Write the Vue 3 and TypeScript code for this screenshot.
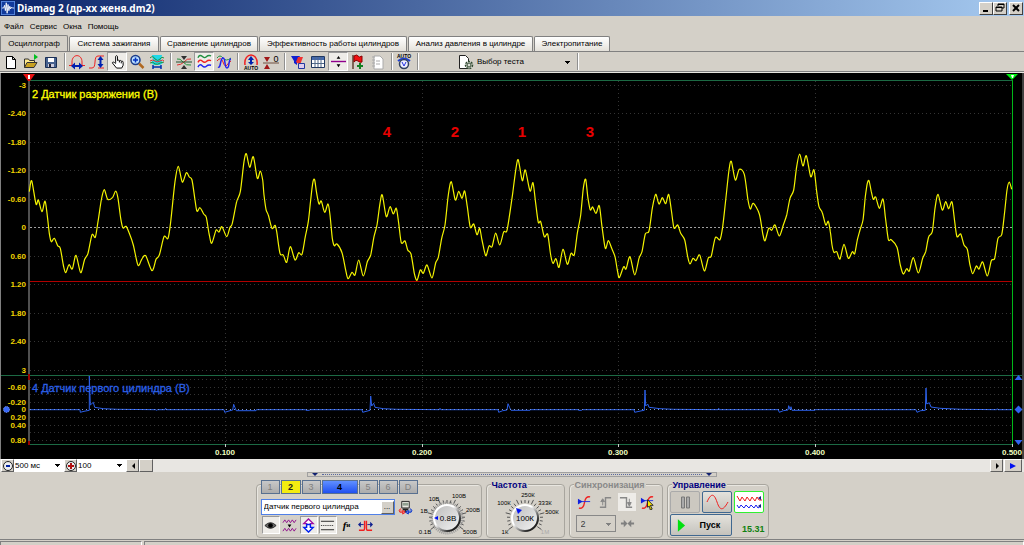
<script setup lang="ts">
import { ref } from 'vue'

type Point = [number, number]

const tabs = [
  { label: 'Осциллограф', size: 'w67' },
  { label: 'Система зажигания', size: 'w90' },
  { label: 'Сравнение цилиндров', size: 'w98' },
  { label: 'Эффективность работы цилиндров', size: 'w147' },
  { label: 'Анализ давления в цилиндре', size: 'w125' },
  { label: 'Электропитание', size: 'w76' },
]
const activeTab = ref(0)
const menu = ['Файл', 'Сервис', 'Окна', 'Помощь']
const channels = ['1', '2', '3', '4', '5', '6', 'D']
const sensorName = ref('Датчик первого цилиндра')

// Samples are stored at three units per plot unit, in blocks with their own start.
const vacuumBlocks: { start: number; data: number[] }[] = [
  {
    start: 0,
    data: [
      88, 155, 95, 122, 108, 192, 115, 180, 126, 215, 136, 185, 148, 280, 154, 305, 163, 295, 173, 317, 181, 325,
      190, 375, 197, 398, 207, 374, 217, 387, 228, 346, 242, 398, 254, 358, 264, 340, 276, 284, 286, 292, 294, 245,
      304, 180, 313, 149, 323, 178, 338, 172, 347, 153, 354, 175, 362, 235, 369, 264, 378, 259, 388, 280, 400, 315,
      414, 376, 425, 358, 437, 347, 456, 392, 468, 358, 478, 345, 492, 290, 504, 295, 512, 245, 525, 125, 535, 79,
      547, 126, 559, 98, 568, 111, 576, 120, 585, 180, 591, 214, 600, 203, 611, 222, 619, 232, 627, 280, 635, 310,
      648, 271, 657, 276, 666, 260, 680, 290, 690, 262, 697, 250, 710, 185, 721, 155, 732, 65, 739, 41, 749, 82,
      760, 50, 772, 115,
    ],
  },
  {
    start: 780,
    data: [
      1, 93, 8, 120, 12, 165, 18, 208, 25, 225, 36, 265, 45, 256, 50, 275, 60, 340, 70, 345, 80, 367, 91, 320,
      105, 360, 116, 338, 126, 343, 136, 290, 145, 245, 152, 180, 159, 125, 164, 120, 170, 160, 177, 192, 184, 183,
      194, 217, 204, 192, 210, 225, 217, 295, 223, 317, 231, 312, 246, 338, 256, 385, 264, 416, 276, 397, 285, 405,
      296, 360, 310, 408, 322, 365, 332, 345, 342, 290, 351, 255, 360, 190, 367, 165, 379, 230, 390, 200, 400, 222,
      409, 205, 416, 250, 424, 308, 435, 303, 443, 330, 453, 342, 463, 400, 471, 421, 481, 390, 490, 400, 501, 375,
      516, 414, 527, 368, 535, 352, 545, 295, 555, 255, 565, 165, 574, 125, 586, 180, 596, 154, 606, 175, 614, 153,
      622, 200, 631, 262, 641, 252, 651, 284, 659, 265, 666, 300, 677, 347, 687, 318, 696, 320, 707, 279, 719, 315,
      731, 276, 740, 274, 748, 230, 758, 160, 768, 85, 775, 60,
    ],
  },
  {
    start: 1560,
    data: [
      7, 122, 16, 90, 30, 153, 39, 128, 47, 190, 55, 247, 62, 245, 73, 290, 83, 283, 92, 345, 99, 370, 108, 356,
      117, 382, 129, 328, 142, 373, 153, 340, 163, 344, 172, 280, 182, 225, 190, 145, 197, 118, 204, 175, 211, 210,
      218, 201, 228, 220, 238, 197, 246, 260, 256, 325, 265, 302, 275, 325, 285, 350, 292, 390, 298, 413, 311, 380,
      318, 387, 330, 350, 344, 405, 357, 355, 366, 335, 376, 282, 387, 273, 397, 205, 407, 163, 417, 192, 427, 173,
      437, 191, 446, 163, 454, 210, 462, 264, 473, 255, 482, 280, 494, 300, 503, 350, 510, 372, 519, 355, 528, 362,
      539, 345, 553, 393, 565, 354, 574, 348, 586, 293, 600, 299, 608, 260, 617, 180, 627, 90, 634, 64, 646, 120,
      658, 88, 673, 103, 684, 180, 691, 207, 700, 190, 718, 222, 728, 280, 735, 302, 746, 265,
    ],
  },
  {
    start: 2310,
    data: [
      5, 271, 15, 255, 28, 288, 40, 255, 50, 225, 60, 175, 71, 150, 80, 80, 89, 42, 99, 78, 109, 47, 122, 110,
      132, 90, 140, 155, 147, 200, 157, 218, 167, 255, 175, 244, 181, 275, 186, 315, 192, 337, 200, 335, 210, 357,
      222, 313, 235, 355, 247, 335, 254, 341, 262, 300, 270, 270, 279, 240, 286, 170, 292, 130, 297, 122, 304, 155,
      310, 178, 317, 171, 328, 205, 339, 177, 346, 230, 355, 298, 364, 299, 381, 322, 391, 375, 400, 402, 410, 386,
      418, 393, 430, 353, 445, 399, 458, 355, 467, 335, 476, 290, 487, 275, 495, 205, 504, 163, 517, 210, 527, 185,
      536, 206, 546, 186, 554, 245, 561, 290, 572, 282, 582, 315, 592, 328, 600, 375, 608, 401, 619, 378, 627, 387,
      638, 366, 652, 408, 664, 362, 674, 355, 684, 295, 695, 284, 703, 225, 711, 150, 718, 126, 725, 148,
    ],
  },
]
const cylinderBlocks: { start: number; data: number[] }[] = [
  {
    start: 0,
    data: [
      88, 149, 240, 149, 241, 157, 252, 154, 268, 151, 268, 48, 271, 135, 280, 127, 284, 142, 310, 146, 352, 148,
      468, 149, 470, 151, 473, 149, 495, 149, 497, 145, 499, 149, 672, 149, 674, 157, 690, 152, 698, 150, 701, 133,
      705, 143, 709, 152, 768, 152, 769, 149, 916, 149, 918, 151, 928, 151, 930, 149, 1086, 149, 1088, 157,
      1110, 151, 1112, 108, 1115, 138, 1121, 130, 1125, 142, 1150, 146, 1190, 148, 1318, 149, 1320, 145, 1322, 149,
      1494, 149, 1496, 157, 1508, 152, 1521, 150, 1524, 131, 1529, 143, 1533, 151, 1590, 151, 1592, 149,
      1734, 149, 1736, 151, 1745, 151, 1747, 149,
    ],
  },
  {
    start: 1800,
    data: [
      102, 149, 104, 157, 126, 152, 133, 151, 135, 90, 137, 138, 143, 132, 147, 142, 180, 146, 220, 148, 354, 149,
      356, 145, 358, 149, 535, 149, 538, 157, 550, 152, 564, 150, 566, 137, 570, 148, 573, 140, 576, 151, 645, 151,
      647, 149, 948, 149, 951, 157, 962, 152, 976, 151, 978, 84, 980, 132, 988, 128, 993, 141, 1020, 145,
      1085, 148, 1190, 149, 1192, 146, 1194, 149, 1236, 149,
    ],
  },
]

function toPoints(blocks: { start: number; data: number[] }[], top: number): Point[] {
  const out: Point[] = []
  for (const block of blocks) {
    for (let i = 0; i < block.data.length; i += 2) {
      out.push([(block.start + block.data[i]) / 3, top + block.data[i + 1] / 3])
    }
  }
  return out
}
const n = (v: number) => v.toFixed(1)
function smooth(p: Point[]): string {
  let d = `M${n(p[0][0])} ${n(p[0][1])}`
  for (let i = 1; i < p.length; i++) {
    const a = p[i - 2 < 0 ? 0 : i - 2]
    const b = p[i - 1]
    const c = p[i]
    const e = p[Math.min(i + 1, p.length - 1)]
    d += `C${n(b[0] + (c[0] - a[0]) / 7)} ${n(b[1] + (c[1] - a[1]) / 7)} ${n(c[0] - (e[0] - b[0]) / 7)} ${n(c[1] - (e[1] - b[1]) / 7)} ${n(c[0])} ${n(c[1])}`
  }
  return d
}
const vacuumPath = smooth(toPoints(vacuumBlocks, 140))
const cylinderPath = 'M' + toPoints(cylinderBlocks, 360).map((p) => `${n(p[0])} ${n(p[1])}`).join('L')

const mainScale = ['-3', '-2.40', '-1.80', '-1.20', '-0.60', '0', '0.60', '1.20', '1.80', '2.40', '3'].map(
  (text, i) => ({ text, y: Math.floor(85 + i * 28.5) }),
)
const subScale = [
  { text: '-0.60', y: 387 },
  { text: '-0.20', y: 402 },
  { text: '0', y: 409 },
  { text: '0.20', y: 417 },
  { text: '0.40', y: 425 },
  { text: '0.80', y: 440 },
]
const subLines = [379, 387, 394, 402, 417, 425, 432, 440]
const timeScale = [
  { text: '0.100', x: 225 },
  { text: '0.200', x: 422 },
  { text: '0.300', x: 618 },
  { text: '0.400', x: 815 },
  { text: '0.500', x: 1012 },
]
const cylinders = [
  { text: '4', x: 387 },
  { text: '2', x: 455 },
  { text: '1', x: 522 },
  { text: '3', x: 590 },
]

function ticks(cx: number, cy: number): string {
  let d = ''
  for (let a = -215; a <= 35; a += 12.5) {
    const r = (a * Math.PI) / 180
    const outer = (a + 215) % 50 === 0 ? 20 : 18
    d += `M${n(cx + 15 * Math.cos(r))} ${n(cy + 15 * Math.sin(r))}L${n(cx + outer * Math.cos(r))} ${n(cy + outer * Math.sin(r))}`
  }
  return d
}
const knobTicks = ticks(31, 35)
const voltLabels = [
  { t: '0.1В', x: 9, y: 51 },
  { t: '1В', x: 8, y: 30 },
  { t: '10В', x: 18, y: 18 },
  { t: '100В', x: 43, y: 15 },
  { t: '200В', x: 57, y: 29 },
  { t: '500В', x: 54, y: 51 },
]
const freqLabels = [
  { t: '1К', x: 11, y: 51 },
  { t: '100К', x: 10, y: 22 },
  { t: '250К', x: 34, y: 14 },
  { t: '333К', x: 51, y: 22 },
  { t: '500К', x: 58, y: 31 },
]
</script>

<template>
  <div class="app">
    <header class="title-bar">
      <svg class="logo" viewBox="0 0 16 16" aria-hidden="true">
        <rect width="16" height="16" fill="#5a8ae0" />
        <rect x="1" y="1" width="14" height="14" fill="#123a9c" />
        <path d="M1 8h2l1-3 1 6 1-9 1 12 1-10 1 7 1-5 1 3 1-2 1 1h2" fill="none" stroke="#fff" />
      </svg>
      <h1>Diamag 2 (др-хх женя.dm2)</h1>
      <div class="window-buttons">
        <button type="button" aria-label="Свернуть"><svg viewBox="0 0 12 10"><path d="M3 8h5" stroke="#000" stroke-width="2" /></svg></button>
        <button type="button" aria-label="Восстановить"><svg viewBox="0 0 12 10"><path d="M4 3V1h6v4H8M4 1.500h6M2 4h6v4H2zM2 4.500h6" fill="none" stroke="#000" /></svg></button>
        <button type="button" class="close" aria-label="Закрыть"><svg viewBox="0 0 12 10"><path d="M3 2l6 6M9 2L3 8" stroke="#000" stroke-width="2" /></svg></button>
      </div>
    </header>

    <nav class="menu">
      <button v-for="m in menu" :key="m" type="button">{{ m }}</button>
    </nav>

    <div class="tabs" role="tablist">
      <button
        v-for="(t, i) in tabs"
        :key="t.label"
        type="button"
        role="tab"
        :aria-selected="activeTab === i"
        :class="['tab', t.size, { active: activeTab === i }]"
        @click="activeTab = i"
      >{{ t.label }}</button>
    </div>

    <div class="toolbar" role="toolbar">
      <button type="button" aria-label="Новый"><svg viewBox="0 0 16 16"><path d="M3.500 2.500h6l3 3v9h-9zM9.500 2.500v3h3" fill="#fff" stroke="#000" /></svg></button>
      <button type="button" aria-label="Открыть"><svg viewBox="0 0 16 16"><path d="M1.500 13.500V5h4l1 1.500h5v2" fill="#ffe98a" stroke="#333" /><path d="M1.500 13.500L4 8.500h10l-3 5z" fill="#c8a020" stroke="#333" /><path d="M11 0l4 3-4 3z" fill="#00c020" /></svg></button>
      <button type="button" aria-label="Сохранить"><svg viewBox="0 0 16 16"><path d="M2.500 3.500h11v10h-11z" fill="#47628f" stroke="#1b2f55" /><path d="M5 4h6v4H5z" fill="#fff" /><path d="M5 10h6v3H5z" fill="#ccd" /><path d="M6 10h2v3H6z" fill="#223" /></svg></button>
      <i class="sep"></i>
      <button type="button" aria-label="Период"><svg viewBox="0 0 16 16"><path d="M0 11.500h3V8C3-.5 13-.5 13 8v3.500h3" fill="none" stroke="#f02020" /><path d="M5 12h6" stroke="#0020b0" stroke-width="2" /><path d="M6 8.500L2 12l4 3.500zM10 8.500l4 3.500-4 3.500z" fill="#0020b0" /></svg></button>
      <button type="button" aria-label="Амплитуда"><svg viewBox="0 0 16 16"><path d="M0 14h3C8 14 4 2 9 2h6M9 14h6" fill="none" stroke="#f02020" /><path d="M11.500 4v8" stroke="#0020b0" stroke-width="2" /><path d="M8.500 6l3-4 3 4zM8.500 10l3 4 3-4z" fill="#0020b0" /></svg></button>
      <button type="button" class="pressed" aria-label="Рука"><svg viewBox="0 0 16 16"><path d="M6 9V2.500q1-1.500 2 0V7q1-1 2 .3 1-1 2 .3 2-.5 2 1.400V12l-1.500 3H7L2.500 9.500q.5-2 3.500.5z" fill="#fff" stroke="#000" /><path d="M10 7v2M12 8v2" stroke="#000" /></svg></button>
      <button type="button" aria-label="Масштаб"><svg viewBox="0 0 16 16"><circle cx="6.500" cy="6" r="4.500" fill="#b8dcff" stroke="#1c3c88" stroke-width="1.500" /><path d="M4 6h5M6.500 3.500v5" stroke="#0030c0" stroke-width="1.500" /><path d="M10 9.500l4.500 4.500" stroke="#b06820" stroke-width="2.500" /></svg></button>
      <button type="button" aria-label="Сжать"><svg viewBox="0 0 16 16"><path d="M3 1h10l-1 5 2 3-3 2H5L2 9l2-3z" fill="#20d8e8" /><path d="M1 4q3-3 5 1 3 3 5 0 2-3 4-1M1 9q3-2 5 1 3 1 5-1l4-1" fill="none" stroke="#209040" /><path d="M1 7q3-2 5 0t5 0 4 0" fill="none" stroke="#e03030" /><path d="M4 13h8M4 11v4M12 11v4" stroke="#0030b0" stroke-width="1.500" /></svg></button>
      <i class="sep wide"></i>
      <button type="button" aria-label="Совместить"><svg viewBox="0 0 16 16"><path d="M1 5q3-1 6 3 3 4 8 3" fill="none" stroke="#20903c" /><path d="M1 11q4 0 7-3 3-4 7-3" fill="none" stroke="#e03030" /><path d="M0 8h16" stroke="#205030" /><path d="M5 2h6L8 6zM5 15h6l-3-4z" fill="#303030" /></svg></button>
      <button type="button" class="pressed" aria-label="Разнести"><svg viewBox="0 0 16 16"><path d="M1 4q2-4 4.500-1.500T10 3t5-1" fill="none" stroke="#209040" stroke-width="1.500" /><path d="M1 9q2-4 4.500-1.500T10 8t5-1" fill="none" stroke="#f02020" stroke-width="1.500" /><path d="M1 14q2-4 4.500-1.500T10 13t5-1" fill="none" stroke="#2020f0" stroke-width="1.500" /></svg></button>
      <button type="button" aria-label="Наложить"><svg viewBox="0 0 16 16"><path d="M1 4q3-4 6 0t8 0" fill="none" stroke="#209040" /><path d="M1 7q4-5 6 1t4 3 4-4" fill="none" stroke="#f02020" /><path d="M2 13c3 2 2-9 5-9s1 10 4 10 1-9 4-9" fill="none" stroke="#2020f0" stroke-width="1.500" /></svg></button>
      <i class="sep wide"></i>
      <button type="button" aria-label="Авто"><svg viewBox="0 0 16 16"><path d="M2 11C1 4 5 1 8 1s7 3 6 10" fill="none" stroke="#f02020" stroke-width="1.500" /><path d="M8 4v6" stroke="#0020b0" stroke-width="2" /><path d="M5 6l3-4 3 4zM5 8l3 3 3-3z" fill="#0020b0" /><text x="8" y="16" class="auto">AUTO</text></svg></button>
      <button type="button" aria-label="Ноль"><svg viewBox="0 0 16 16"><path d="M0 9h16" stroke="#705040" /><path d="M1 3h6L4 8zM1 15h6l-3-5z" fill="#a01818" /><text x="13" y="8" class="zero">0</text></svg></button>
      <i class="sep wide"></i>
      <button type="button" aria-label="Фильтр"><svg viewBox="0 0 16 16"><path d="M1 2h9L7 7v4L4 9V7z" fill="#1020d0" /><path d="M8 3h5l-3 8-4-3z" fill="#f03030" /><path d="M8.500 9.500h6v5h-6z" fill="#dce" stroke="#2038a0" /></svg></button>
      <button type="button" aria-label="Таблица"><svg viewBox="0 0 16 16"><path d="M1.500 2.500h13v11h-13z" fill="#fff" stroke="#203860" /><path d="M2 3h12v3H2z" fill="#4268b0" /><path d="M5 3v10M8 3v10M11 3v10M2 9.500h12" stroke="#506888" /></svg></button>
      <button type="button" class="pressed" aria-label="Линия"><svg viewBox="0 0 16 16"><path d="M0 8h16" stroke="#90008c" stroke-width="1.500" /><path d="M6 5l2-3 2 3zM6 11l2 3 2-3z" fill="#000" /></svg></button>
      <button type="button" aria-label="Флаг"><svg viewBox="0 0 16 16"><path d="M3 1v14" stroke="#604030" stroke-width="1.500" /><path d="M4 2q3-2 4 0t4 0v6q-2 1-4-1t-4 1z" fill="#f01010" stroke="#800" /><path d="M7 12h6M10 9v6" stroke="#108020" stroke-width="2" /></svg></button>
      <button type="button" aria-label="Отчёт"><svg viewBox="0 0 16 16"><path d="M4 2h6l3 3v10H4z" fill="#fff" stroke="#aaa" /><path d="M2 3h3M2 6h3M2 9h3M2 12h3M6 7h4M6 10h4" stroke="#aaa" /></svg></button>
      <i class="sep"></i>
      <button type="button" aria-label="Авторежим"><svg viewBox="0 0 16 16"><text x="8" y="4" class="auto">AUTO</text><path d="M2 7q6-5 12 0" fill="none" stroke="#2040d0" stroke-width="2" /><circle cx="8" cy="10" r="4.500" fill="#eef" stroke="#304060" stroke-width="1.500" /><path d="M6 8l2 4 2-4" fill="none" stroke="#2030e0" /></svg></button>
      <i class="sep wide"></i>
      <label class="test-picker">
        <svg viewBox="0 0 16 16" aria-hidden="true"><path d="M1.500 1.500h6l3 3v10h-9z" fill="#fff" stroke="#222" /><circle cx="11" cy="11" r="3.500" fill="#dde0d8" stroke="#304830" stroke-width="1.500" stroke-dasharray="2 1" /><circle cx="11" cy="11" r="2" fill="none" stroke="#304830" /></svg>
        <select aria-label="Выбор теста"><option>Выбор теста</option></select>
      </label>
      <i class="sep"></i>
    </div>

    <main class="scope">
      <svg viewBox="0 73 1024 386" role="img" aria-label="Осциллограммы">
        <rect x="0" y="73" width="1024" height="386" fill="#000" />
        <g class="grid">
          <path v-for="g in mainScale" :key="g.text" :d="`M30 ${g.y}.5H1012`" :class="{ zero: g.text === '0' }" />
          <path v-for="y in subLines" :key="y" :d="`M30 ${y}.5H1012`" />
          <path v-for="t in timeScale.slice(0, 4)" :key="t.x" :d="`M${t.x}.5 81V444`" />
        </g>
        <path d="M29 80.500H1012M1 375.500H1022M29 444.500H1012" stroke="#1c6a44" />
        <path d="M29 281.500H1012" stroke="#b00000" />
        <rect x="28" y="81" width="2" height="364" fill="#505050" />
        <path d="M29 374v6M29 441v4" stroke="#900" stroke-width="2" />
        <path v-for="t in timeScale" :key="t.text" :d="`M${t.x}.5 444v3`" stroke="#ccc" />
        <path :d="cylinderPath" class="cylinder" />
        <path d="M30 409.500H1012" class="cylinder-zero" />
        <path :d="vacuumPath" class="vacuum" />
        <g class="scale">
          <text v-for="g in mainScale" :key="g.text" x="26" :y="g.y + 3">{{ g.text }}</text>
          <text v-for="g in subScale" :key="g.text" x="26" :y="g.y + 3">{{ g.text }}</text>
        </g>
        <g class="time">
          <text v-for="t in timeScale" :key="t.text" :x="t.x" y="455">{{ t.text }}</text>
        </g>
        <text x="32" y="98" class="trace-name yellow">2 Датчик разряжения (В)</text>
        <text x="32" y="392" class="trace-name blue">4 Датчик первого цилиндра (В)</text>
        <g class="cyl">
          <text v-for="c in cylinders" :key="c.text" :x="c.x" y="137">{{ c.text }}</text>
        </g>
        <path d="M1012.500 80V444" stroke="#00b818" />
        <path d="M23 74h12l-5 7h-2z" fill="#e81010" />
        <path d="M28 75h2v4h-2z" fill="#fff" />
        <path d="M1006 74h12l-6 6z" fill="#00f010" />
        <path d="M1011 75h3l-1 3h-1z" fill="#fff" />
        <circle cx="6.500" cy="409.500" r="3" fill="#3868f8" stroke="#88a8ff" stroke-dasharray="1 1" />
        <path d="M1014.500 380l4-5 4 5zM1014.500 440h8l-4 5zM1018.500 405.500l4 4-4 4-4-4z" fill="#3064f0" />
        <path d="M.5 73V459M1023 73V459" stroke="#808080" />
      </svg>
    </main>

    <div class="scroll-row">
      <button type="button" class="raised" aria-label="Уменьшить развёртку"><svg viewBox="0 0 12 12"><circle cx="6" cy="6" r="4.500" fill="#eee" stroke="#222" /><path d="M4 6h4" stroke="#0020a0" stroke-width="2" /></svg></button>
      <select class="combo span" aria-label="Развёртка"><option>500 мс</option></select>
      <button type="button" class="raised" aria-label="Увеличить масштаб"><svg viewBox="0 0 12 12"><circle cx="6" cy="6" r="4.500" fill="#eee" stroke="#222" /><path d="M3 6h6M6 3v6" stroke="#b01010" stroke-width="2" /></svg></button>
      <select class="combo percent" aria-label="Масштаб"><option>100</option></select>
      <button type="button" class="raised arrow" aria-label="Назад"><svg viewBox="0 0 12 12"><path d="M8 3v6L5 6z" /></svg></button>
      <div class="track"><span class="thumb"></span></div>
      <button type="button" class="raised" aria-label="Вперёд"><svg viewBox="0 0 12 12"><path d="M5 3v6l3-3z" /></svg></button>
      <button type="button" class="raised play" aria-label="Воспроизвести"><svg viewBox="0 0 12 12"><path d="M3 3v6l6-3z" fill="#0010f0" /></svg></button>
    </div>

    <div class="splitter"><b></b><span></span><b></b></div>

    <div class="panel">
      <section class="group channel-group">
        <div class="channel-main">
          <div class="channels">
            <button v-for="c in channels" :key="c" type="button" :class="{ yellow: c === '2', current: c === '4' }">{{ c }}</button>
          </div>
          <div class="sensor-row">
            <div class="sensor">
              <input v-model="sensorName" type="text" aria-label="Датчик" />
              <button type="button" class="raised" aria-label="Выбрать датчик">...</button>
            </div>
            <button type="button" class="plain" aria-label="Разъём"><svg viewBox="0 0 16 16"><path d="M4 1.500h8v7H4z" fill="#e8e8e0" stroke="#222" /><path d="M5 3h6v3H5z" fill="#90a090" /><path d="M5 10h6M8 9v4" stroke="#222" stroke-width="2" /><path d="M3 9q-3 2-1 4h3M5 11l3 2-3 2z" stroke="#f02020" fill="#f02020" fill-opacity=".4" /><path d="M13 9q3 2 1 4h-3M11 11l-3 2 3 2z" stroke="#0030d0" fill="#0030d0" fill-opacity=".4" /></svg></button>
          </div>
          <div class="icon-row">
            <button type="button" class="pressed" aria-label="Показать"><svg viewBox="0 0 16 16"><path d="M2 8q6-6 12 0-6 6-12 0z" fill="#666" stroke="#222" /><circle cx="8" cy="8" r="2.500" /></svg></button>
            <button type="button" class="plain" aria-label="Огибающая"><svg viewBox="0 0 16 16"><path d="M1 5l2-3 2 3 2-3 2 3 2-3 2 3 2-3M1 14l2-3 2 3 2-3 2 3 2-3 2 3 2-3" fill="none" stroke="#90108c" /><path d="M6 7h4l-2 3z" /></svg></button>
            <button type="button" class="pressed" aria-label="Инверсия"><svg viewBox="0 0 16 16"><path d="M8 1l5 5h-3v3H6V6H3z" fill="#fff" stroke="#a010a0" stroke-width="1.500" /><path d="M6 7h4v3h3l-5 5-5-5h3z" fill="#fff" stroke="#0020f0" stroke-width="1.500" /></svg></button>
            <button type="button" class="pressed" aria-label="Уровни"><svg viewBox="0 0 16 16"><path d="M1 3.500h14M1 12.500h14" stroke="#222" /><path d="M1 8h14" stroke="#222" stroke-dasharray="1 1" /></svg></button>
            <button type="button" class="plain fx" aria-label="Функция"><i>f</i><sub>и</sub></button>
            <button type="button" class="plain" aria-label="Импульс"><svg viewBox="0 0 16 16"><path d="M1 13h5q1 0 1-3V3M9 3v7q0 3 1 3h5" fill="none" stroke="#f02020" stroke-width="1.500" /><path d="M0 7l3-3v6zM16 7l-3-3v6z" fill="#102090" /><path d="M2 7h4M10 7h4" stroke="#102090" /></svg></button>
          </div>
        </div>
        <svg class="knob" viewBox="0 0 66 54" role="img" aria-label="0.8В">
          <defs>
            <linearGradient id="dialEdge" x1="0" y1="0" x2="1" y2="1"><stop offset="0.400" stop-color="#fff" /><stop offset="0.800" stop-color="#222" /></linearGradient>
            <linearGradient id="dialFace" x1="0" y1="0" x2="1" y2="1"><stop offset="0" stop-color="#bbb" /><stop offset="1" stop-color="#f4f4f4" /></linearGradient>
          </defs>
          <path :d="knobTicks" stroke="#555" />
          <circle cx="31" cy="35" r="15" fill="none" stroke="#999" stroke-width="3" stroke-dasharray="1 1" />
          <circle cx="31" cy="35" r="13" fill="url(#dialFace)" stroke="url(#dialEdge)" stroke-width="2" />
          <path d="M22 33v4l-4-2z" fill="#0010f0" />
          <text x="32" y="38" class="value">0.8В</text>
          <text v-for="l in voltLabels" :key="l.t" :x="l.x" :y="l.y">{{ l.t }}</text>
        </svg>
      </section>

      <section class="group freq-group">
        <h2>Частота</h2>
        <svg class="knob" viewBox="0 0 66 54" role="img" aria-label="100К">
          <path :d="knobTicks" stroke="#555" />
          <circle cx="31" cy="35" r="13" fill="url(#dialFace)" stroke="url(#dialEdge)" stroke-width="2" />
          <path d="M22 25l6 2-4 4z" fill="#0010f0" />
          <text x="31" y="38" class="value">100К</text>
          <text v-for="l in freqLabels" :key="l.t" :x="l.x" :y="l.y">{{ l.t }}</text>
          <text x="51" y="51" class="off">1М</text>
        </svg>
      </section>

      <section class="group sync-group">
        <h2 class="off">Синхронизация</h2>
        <div class="sync-row">
          <button type="button" class="plain" aria-label="Уровень"><svg viewBox="0 0 16 16"><path d="M2 14q5 1 6-6t6-6" fill="none" stroke="#f02020" stroke-width="1.500" /><path d="M1 7h13" stroke="#2030e0" /><path d="M1 4l5 3-5 3z" fill="#1020e0" /></svg></button>
          <button type="button" class="plain" aria-label="Фронт"><svg viewBox="0 0 16 16"><path d="M2 13h6V3h6" fill="none" stroke="#888" stroke-width="1.500" /><path d="M5 11V6M3 7l2-3 2 3z" stroke="#888" fill="#888" /></svg></button>
          <button type="button" class="pressed" aria-label="Спад"><svg viewBox="0 0 16 16"><path d="M1 3h7v10h6" fill="none" stroke="#888" stroke-width="1.500" /><path d="M11 4v5M9 8l2 4 2-4z" stroke="#888" fill="#888" /></svg></button>
          <button type="button" class="plain" aria-label="Указать уровень"><svg viewBox="0 0 16 16"><path d="M2 14q5 1 6-6t6-6" fill="none" stroke="#f02020" stroke-width="1.500" /><path d="M1 6h13" stroke="#2030e0" /><path d="M1 3l5 3-5 3z" fill="#1020e0" /><path d="M8 5l6 6h-3l2 4-2 1-1-4-2 1z" fill="#ffe800" stroke="#222" /></svg></button>
        </div>
        <div class="sync-row lower">
          <select aria-label="Канал синхронизации"><option>2</option></select>
          <svg class="join" viewBox="0 0 16 16" aria-hidden="true"><path d="M1 8h5M10 8h5" stroke="#808080" stroke-width="2" /><path d="M4 4l4 4-4 4zM12 4L8 8l4 4z" fill="#808080" /></svg>
        </div>
      </section>

      <section class="group control-group">
        <h2>Управление</h2>
        <div class="controls">
          <button type="button" class="big disabled" aria-label="Пауза"><svg viewBox="0 0 28 20"><path d="M10.500 5v11h3V5zM15.500 5v11h3V5z" fill="#aaa" stroke="#777" /></svg></button>
          <button type="button" class="big" aria-label="Один канал"><svg viewBox="0 0 28 20"><path d="M4 10c4-9 7-9 10 0s6 9 11 0" fill="none" stroke="#f02020" /></svg></button>
          <button type="button" class="big on" aria-label="Все каналы"><svg viewBox="0 0 28 20"><path d="M2 4l3 5 2-4 3 4 2-4 3 4 2-4 3 4 2-4 2 3h3" fill="none" stroke="#f01818" /><path d="M2 13l2 3 2-3 3 3 2-3 3 3 2-3 3 3 2-3 2 3 3-2" fill="none" stroke="#1820f0" /><path d="M26 4v4l-3-2zM26 12v4l-3-2z" fill="#102080" /></svg></button>
        </div>
        <div class="controls bottom">
          <button type="button" class="big start"><svg viewBox="0 0 10 14" aria-hidden="true"><path d="M1 0l8 7-8 7z" fill="#00e010" /></svg><span>Пуск</span></button>
          <output>15.31</output>
        </div>
      </section>
    </div>

    <footer class="status"><span class="device">USB Осциллограф</span><span class="rest"></span></footer>
  </div>
</template>

<style>
body { margin: 0; background: #d4d0c8; overflow: hidden; }
</style>

<style scoped>
.app { display: flex; flex-direction: column; max-height: 100vh; overflow: hidden; background: #d4d0c8; color: #000; font: 8px/10px "Liberation Sans", Arial, sans-serif; }
.app * { box-sizing: border-box; }
.app > * { flex-shrink: 0; }
button, select, input { margin: 0; padding: 0; border: 0; border-radius: 0; background: transparent; color: inherit; font: inherit; }
svg { display: block; }
select { appearance: none; background-repeat: no-repeat; }
h1, h2 { margin: 0; }

.title-bar { display: flex; align-items: center; height: 16px; padding: 0 1px; background: linear-gradient(90deg, #0a246a, #a6caf0); color: #fff; }
.logo { width: 14px; height: 14px; }
h1 { flex: 1; padding-left: 2px; font: bold 10px/14px "Noto Sans", "Liberation Sans", sans-serif; }
.window-buttons { display: flex; }
.window-buttons button { width: 14px; height: 13px; border: 1px solid; border-color: #fff #404040 #404040 #fff; background: #d4d0c8; }
.window-buttons .close { margin-left: 2px; }
.window-buttons svg { width: 12px; height: 10px; }

.menu { display: flex; gap: 6px; height: 19px; padding: 2px 4px 0; }
.tabs { display: flex; align-items: flex-end; gap: 1px; height: 17px; border-bottom: 1px solid #808080; }
.tab { height: 15px; border: 1px solid #808080; border-bottom: 0; border-radius: 2px 2px 0 0; background: linear-gradient(#fff, #e4e1da); white-space: nowrap; }
.tab.active { height: 16px; background: #d4d0c8; }
.w67 { width: 68px; }
.w90 { width: 90px; }
.w98 { width: 98px; }
.w147 { width: 148px; }
.w125 { width: 125px; }
.w76 { width: 76px; }

.toolbar { display: flex; align-items: center; height: 20px; padding-left: 1px; border-bottom: 1px solid #808080; }
.toolbar > button { display: grid; place-items: center; width: 20px; height: 19px; }
.toolbar svg { width: 16px; height: 16px; overflow: visible; }
.pressed { background: #eeece8; border: 1px solid; border-color: #999 #fff #fff #999; }
.sep { width: 6px; height: 17px; border-left: 1px solid #909090; box-shadow: inset 1px 0 #fff; margin-left: 3px; margin-right: -3px; }
.sep.wide { width: 7px; }
.auto { font-size: 5px; font-weight: bold; text-anchor: middle; }
.zero { font-size: 9px; text-anchor: middle; }
.test-picker { display: flex; align-items: center; gap: 3px; width: 153px; padding-left: 37px; }
.test-picker select { flex: 1; height: 16px; background-image: linear-gradient(#000, #000), linear-gradient(#000, #000), linear-gradient(#000, #000); background-size: 5px 1px, 3px 1px, 1px 1px; background-position: right 4px top 7px, right 5px top 8px, right 6px top 9px; }

.scope { border-top: 1px solid #e8e6e0; }
.scope svg { width: 100%; height: auto; }
.grid path { stroke: #343434; stroke-dasharray: 1 3; }
.grid .zero { stroke: #a0a0a0; stroke-dasharray: 2 2; }
.vacuum { fill: none; stroke: #f4f400; stroke-width: 1.2; }
.cylinder { fill: none; stroke: #2c60e8; stroke-width: 1; }
.cylinder-zero { stroke: #7c98d8; stroke-dasharray: 1 3; }
.scale { fill: #f4d400; font-weight: bold; text-anchor: end; }
.time { fill: #f0ffc0; font-weight: bold; text-anchor: middle; }
.trace-name { font-size: 11px; stroke-width: .3; }
.yellow { fill: #ff0; stroke: #ff0; }
.blue { fill: #2c60e8; stroke: #2c60e8; }
.cyl { fill: #e80000; font-size: 15px; font-weight: bold; text-anchor: middle; }

.scroll-row { display: flex; height: 13px; padding: 0 2px 0 1px; background: #e8e6e2; }
.raised { display: grid; place-items: center; width: 13px; height: 13px; border: 1px solid; border-color: #fff #606060 #606060 #fff; background: #d4d0c8; }
.raised svg { width: 12px; height: 12px; }
.combo { height: 13px; padding-left: 1px; background-color: #fff; background-image: linear-gradient(#000, #000), linear-gradient(#000, #000), linear-gradient(#000, #000); background-size: 5px 1px, 3px 1px, 1px 1px; background-position: right 4px top 5px, right 5px top 6px, right 6px top 7px; }
.span { width: 50px; }
.percent { width: 49px; }
.track { flex: 1; }
.thumb { display: block; width: 14px; height: 13px; border: 1px solid; border-color: #fff #606060 #606060 #fff; background: #d4d0c8; }
.play { width: 18px; margin-left: 1px; }

.splitter { display: flex; align-items: center; gap: 4px; align-self: center; width: 40%; height: 5px; padding: 0 4px; border: 1px solid #a0a0a0; }
.splitter b { border: 3px solid transparent; border-top-color: #102070; border-bottom: 0; }
.splitter span { flex: 1; border-top: 1px dotted #5868a0; }

.panel { display: flex; justify-content: center; gap: 4px; padding: 7px 0 1px; }
.group { height: 54px; border: 1px solid #a8a59e; border-radius: 4px; box-shadow: inset 1px 1px #e8e6e0; }
.group h2 { width: max-content; margin: -5px 0 0 4px; padding: 0 1px; background: #d4d0c8; color: #000080; font-size: 9px; line-height: 10px; }
.group h2.off { color: #888; }
.channel-group { display: flex; width: 226px; padding-left: 4px; }
.channel-main { display: flex; flex-direction: column; width: 157px; margin-top: -5px; }
.channels { display: flex; gap: 1px; }
.channels button { width: 19px; height: 14px; border: 1px solid #587090; background: linear-gradient(#c8c8c8, #acacac); color: #808080; font-size: 9px; }
.channels .yellow { width: 20px; background: #f4ec10; color: #222; font-weight: bold; }
.channels .current { width: 36px; background: linear-gradient(#6090ff, #2050f0); color: #000; font-weight: bold; }
.sensor-row { display: flex; align-items: center; gap: 2px; margin-top: 5px; }
.sensor { display: flex; align-items: center; width: 134px; height: 16px; border: 1px solid #5080e8; background: #fff; }
.sensor input { flex: 1; min-width: 0; padding-left: 2px; }
.sensor .raised { line-height: 8px; }
.plain, .icon-row .pressed { display: grid; place-items: center; width: 18px; height: 18px; }
.sensor-row .plain { height: 16px; }
.plain svg, .pressed svg { width: 15px; height: 15px; }
.icon-row { display: flex; gap: 1px; margin-top: 1px; padding-left: 1px; }
.fx { display: flex; align-items: center; justify-content: center; font: bold 11px/16px "Liberation Serif", serif; }
.fx sub { font-size: 7px; }
.knob { width: 66px; height: 54px; margin: -2px 0 0 -2px; overflow: visible; }
.knob text { font-size: 6px; text-anchor: middle; }
.knob .value { font-size: 8px; }
.knob .off { fill: #aaa; }
.freq-group { width: 79px; }
.freq-group .knob { margin: -7px 0 0 7px; }
.sync-group { width: 94px; }
.sync-row { display: flex; align-items: center; gap: 3px; padding: 3px 5px 0 6px; }
.sync-row .pressed { display: grid; place-items: center; width: 18px; height: 18px; border-color: #eeece8; }
.sync-row .plain { width: 18px; }
.sync-row.lower { gap: 4px; padding-top: 4px; }
.sync-row select { width: 40px; height: 17px; padding-left: 4px; border: 1px solid #888; color: #404040; font-size: 9px; background-image: linear-gradient(#808080, #808080), linear-gradient(#808080, #808080), linear-gradient(#808080, #808080); background-size: 5px 1px, 3px 1px, 1px 1px; background-position: right 4px top 7px, right 5px top 8px, right 6px top 9px; }
.join { width: 15px; height: 15px; }
.control-group { width: 102px; }
.controls { display: flex; gap: 2px; padding: 1px 3px 0 2px; }
.big { display: grid; place-items: center; width: 30px; height: 22px; border: 1px solid #406890; border-radius: 2px; background: linear-gradient(#e4e2dc, #c4c2bc); }
.big svg { width: 28px; height: 20px; }
.disabled { border-color: #aaa; background: #ccc8c0; }
.on { border-color: #30f030; background: #fff; }
.controls.bottom { align-items: center; }
.big.start { display: flex; align-items: center; gap: 14px; width: 62px; padding-left: 6px; font-size: 9px; font-weight: bold; }
.start svg { width: 9px; height: 13px; }
.controls output { flex: 1; padding-top: 8px; color: #108010; font-size: 9px; font-weight: bold; text-align: right; }

.status { display: flex; gap: 2px; border-top: 1px solid #808080; padding-top: 1px; }
.status span { height: 14px; padding: 1px 2px; border: 1px solid; border-color: #808080 #fff #fff #808080; }
.device { width: 142px; }
.rest { flex: 1; }
</style>
